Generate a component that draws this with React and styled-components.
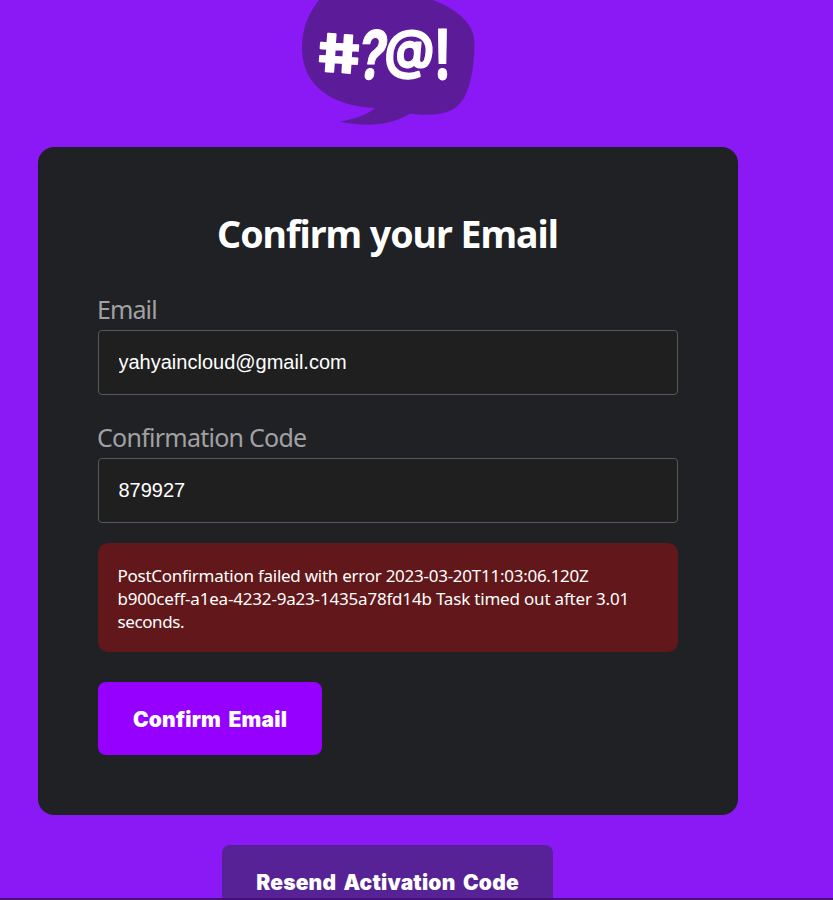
import React, { useState } from "react";
import styled, { createGlobalStyle } from "styled-components";

const GlobalStyle = createGlobalStyle`
  * { box-sizing: border-box; }
  html, body { margin: 0; height: 100%; overflow: hidden; background: #8a19f5; }
`;

const Page = styled.div`
  height: 900px;
  overflow: hidden;
  background: #8a19f5;
  border-bottom: 2px solid #45107c;
  font-family: "Noto Sans", sans-serif;
`;

const Column = styled.main`
  width: 700px;
  height: 900px;
  margin-left: 38px;
  display: flex;
  flex-direction: column;
  align-items: center;
`;

const Logo = styled.svg`
  display: block;
  flex: none;
  width: 174px;
  height: 147px;
`;

const Glyph = styled.text`
  font-family: "Inter", sans-serif;
  font-weight: ${(p) => p.$weight || 700};
  font-size: 50px;
  fill: #fff;
  stroke: #fff;
  stroke-width: ${(p) => p.$stroke || 1};
  stroke-linejoin: round;
`;

const Card = styled.form`
  flex: none;
  width: 700px;
  height: 668px;
  padding: 60px;
  border-radius: 16px;
  background: #202124;
  display: flex;
  flex-direction: column;
  align-items: flex-start;
`;

const Title = styled.h1`
  margin: 0 1px 30px 0;
  align-self: center;
  height: 54px;
  line-height: 53px;
  font-family: "Noto Sans", sans-serif;
  font-size: 37.5px;
  font-weight: 700;
  letter-spacing: -1px;
  white-space: nowrap;
  color: #fff;
`;

const Field = styled.label`
  display: flex;
  flex-direction: column;
  width: 100%;
  margin-bottom: ${(p) => p.$gap}px;
`;

const Label = styled.span`
  height: 39px;
  line-height: 37px;
  margin-left: -1px;
  font-size: 25px;
  letter-spacing: ${(p) => p.$spacing}px;
  color: #a1a1a3;
`;

const Input = styled.input`
  width: 100%;
  height: 65px;
  padding: 0 19.5px;
  border: 1px solid #57585a;
  border-radius: 4px;
  outline: none;
  background: #1f1f1f;
  color: #fff;
  font: 20px "Liberation Sans", Arial, sans-serif;
`;

const ErrorBox = styled.div`
  width: 100%;
  height: 109px;
  padding: 21px 19.5px 20px;
  border-radius: 10px;
  background: #62181a;
  color: #fff;
  font-size: 17px;
  line-height: 23px;
`;

const ErrorLine = styled.span`
  display: block;
  white-space: nowrap;
  letter-spacing: ${(p) => p.$spacing}px;
`;

const Button = styled.button`
  flex: none;
  width: ${(p) => p.$width}px;
  height: 73px;
  margin-top: 30px;
  margin-right: ${(p) => (p.$secondary ? 1 : 0)}px;
  padding: 2px 0 0;
  border: 0;
  border-radius: 8px;
  background: ${(p) => (p.$secondary ? "#572295" : "#9500ff")};
  color: #fff;
  font: 900 21px "Inter", "Arial Black", sans-serif;
  letter-spacing: 0.2px;
  word-spacing: 3px;
  white-space: nowrap;
`;

function BubbleLogo() {
  return (
    <Logo viewBox="301 0 174 147" role="img" aria-label="#?@!">
      <path
        fill="#5c1c99"
        d="M319 0C307 15 302 31 302 48C302 86 332 106 375 108C367 115 355 119 340 121.5C366 127.500 391 125 410 113.700C439 116.500 457 114 466 94C472 80 474.500 61 474.500 43C474.500 23 456 9 433 0Z"
      />
      <Glyph $stroke={1.6} transform="translate(320.500 71) rotate(4) skewX(12) scale(1.31 1.04)">#</Glyph>
      <Glyph $stroke={0.8} transform="translate(356 79) skewX(-8) scale(1 1.34)">?</Glyph>
      <Glyph $stroke={2.4} $weight={500} transform="translate(383.500 68) skewX(-5) scale(1 1.05)">@</Glyph>
      <Glyph $stroke={0.8} transform="translate(434 79) scale(1 1.38)">!</Glyph>
    </Logo>
  );
}

export default function App() {
  const [email, setEmail] = useState("yahyaincloud@gmail.com");
  const [code, setCode] = useState("879927");
  return (
    <Page>
      <GlobalStyle />
      <Column>
        <BubbleLogo />
        <Card onSubmit={(e) => e.preventDefault()}>
          <Title>Confirm your Email</Title>
          <Field $gap={24}>
            <Label $spacing={-0.9}>Email</Label>
            <Input value={email} onChange={(e) => setEmail(e.target.value)} />
          </Field>
          <Field $gap={20}>
            <Label $spacing={-0.75}>Confirmation Code</Label>
            <Input value={code} onChange={(e) => setCode(e.target.value)} />
          </Field>
          <ErrorBox role="alert">
            <ErrorLine $spacing={-0.26}>PostConfirmation failed with error 2023-03-20T11:03:06.120Z</ErrorLine>
            <ErrorLine $spacing={-0.19}>b900ceff-a1ea-4232-9a23-1435a78fd14b Task timed out after 3.01</ErrorLine>
            <ErrorLine $spacing={-0.4}>seconds.</ErrorLine>
          </ErrorBox>
          <Button type="submit" $width={224}>Confirm Email</Button>
        </Card>
        <Button type="button" $secondary $width={331}>Resend Activation Code</Button>
      </Column>
    </Page>
  );
}
